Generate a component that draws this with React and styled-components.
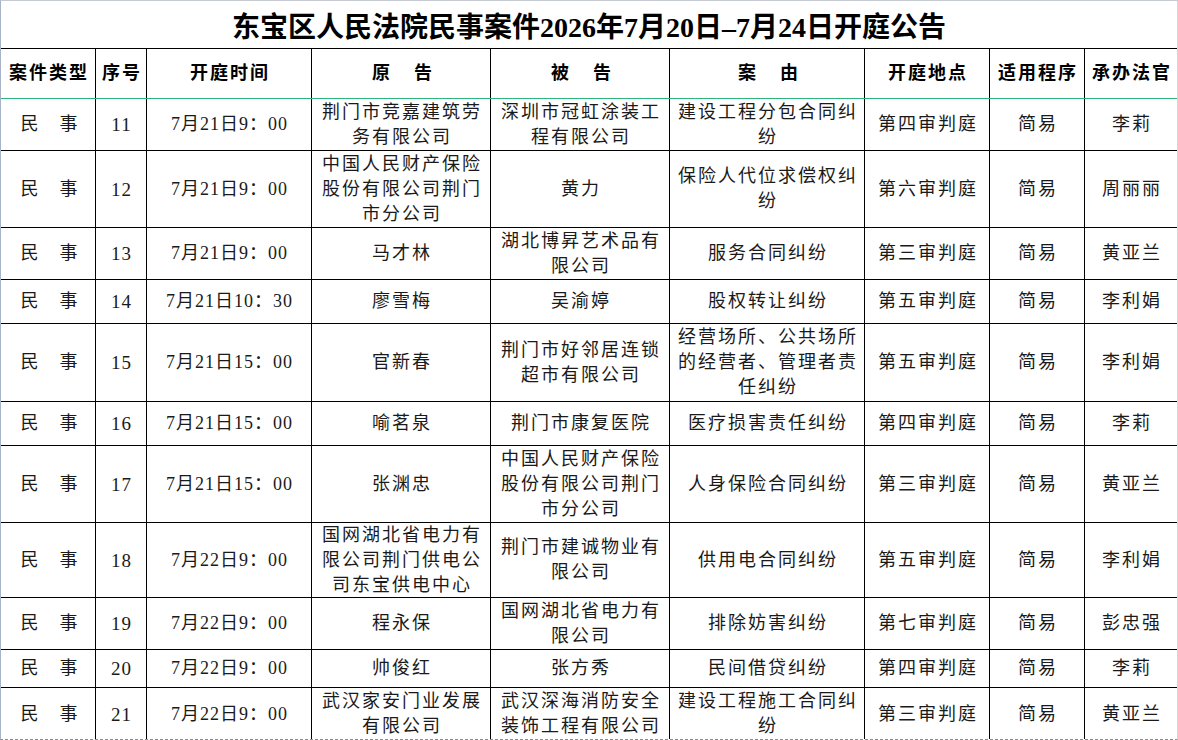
import React from 'react';
import styled, { createGlobalStyle } from 'styled-components';

const Global = createGlobalStyle`
  html, body { margin: 0; padding: 0; background: #fff; }
  body { font-family: "Liberation Serif", "Noto Sans CJK SC", serif; color: #000; }
`;

const COLS = '95px 51px 165px 179px 179px 195px 125px 95px 1fr';

const Sheet = styled.div`
  width: 1178px;
  height: 740px;
  box-sizing: border-box;
  overflow: hidden;
  background: #fff;
  border-top: 1px solid #c6cbd3;
  border-left: 1px solid #a6b3c9;
  border-right: 1px solid #d6d6d6;
  border-bottom: 1px dashed #8c8c8c;
  display: flex;
  flex-direction: column;
`;

const Title = styled.h1`
  margin: 0;
  height: 47px;
  flex-shrink: 0;
  display: flex;
  align-items: center;
  justify-content: center;
  font-family: "Liberation Serif", "Noto Sans CJK SC", serif;
  font-size: 28px;
  font-weight: 700;
  letter-spacing: 0;
  color: #000;
`;

const Table = styled.div`
  border-top: 1px solid #000;
  display: flex;
  flex-direction: column;
`;

const Row = styled.div`
  display: grid;
  grid-template-columns: ${COLS};
  height: ${(p) => p.$h}px;
  flex-shrink: 0;
  box-sizing: border-box;
  border-bottom: 1px solid ${(p) => (p.$head ? '#2db57b' : '#000')};
`;

const Cell = styled.div`
  box-sizing: border-box;
  border-right: 1px solid #000;
  display: flex;
  flex-direction: column;
  align-items: center;
  justify-content: center;
  text-align: center;
  overflow: hidden;
  font-size: ${(p) => (p.$num ? 19 : 18)}px;
  line-height: 25px;
  letter-spacing: ${(p) => (p.$tight ? 1 : 2)}px;
  padding-left: ${(p) => (p.$tight ? 1 : 2)}px;
  font-weight: ${(p) => (p.$head ? 700 : 400)};
  color: ${(p) => (p.$head ? '#000' : '#1a1a1a')};
  &:last-child { border-right: none; }
`;

const Line = styled.span`
  display: block;
  white-space: nowrap;
`;

const Spread = styled.span`
  display: inline-flex;
  gap: ${(p) => p.$gap}px;
  letter-spacing: 0;
`;

const headers = [
  { t: '案件类型' },
  { t: '序号' },
  { t: '开庭时间' },
  { s: ['原', '告'] },
  { s: ['被', '告'] },
  { s: ['案', '由'] },
  { t: '开庭地点' },
  { t: '适用程序' },
  { t: '承办法官' },
];

const rows = [
  { h: 52, n: '11', time: '7月21日9：00', p: ['荆门市竞嘉建筑劳', '务有限公司'], d: ['深圳市冠虹涂装工', '程有限公司'], r: ['建设工程分包合同纠', '纷'], room: '第四审判庭', judge: '李莉' },
  { h: 77, n: '12', time: '7月21日9：00', p: ['中国人民财产保险', '股份有限公司荆门', '市分公司'], d: ['黄力'], r: ['保险人代位求偿权纠', '纷'], room: '第六审判庭', judge: '周丽丽' },
  { h: 52, n: '13', time: '7月21日9：00', p: ['马才林'], d: ['湖北博昇艺术品有', '限公司'], r: ['服务合同纠纷'], room: '第三审判庭', judge: '黄亚兰' },
  { h: 44, n: '14', time: '7月21日10：30', p: ['廖雪梅'], d: ['吴渝婷'], r: ['股权转让纠纷'], room: '第五审判庭', judge: '李利娟' },
  { h: 78, n: '15', time: '7月21日15：00', p: ['官新春'], d: ['荆门市好邻居连锁', '超市有限公司'], r: ['经营场所、公共场所', '的经营者、管理者责', '任纠纷'], room: '第五审判庭', judge: '李利娟' },
  { h: 44, n: '16', time: '7月21日15：00', p: ['喻茗泉'], d: ['荆门市康复医院'], r: ['医疗损害责任纠纷'], room: '第四审判庭', judge: '李莉' },
  { h: 77, n: '17', time: '7月21日15：00', p: ['张渊忠'], d: ['中国人民财产保险', '股份有限公司荆门', '市分公司'], r: ['人身保险合同纠纷'], room: '第三审判庭', judge: '黄亚兰' },
  { h: 75, n: '18', time: '7月22日9：00', p: ['国网湖北省电力有', '限公司荆门供电公', '司东宝供电中心'], d: ['荆门市建诚物业有', '限公司'], r: ['供用电合同纠纷'], room: '第五审判庭', judge: '李利娟' },
  { h: 52, n: '19', time: '7月22日9：00', p: ['程永保'], d: ['国网湖北省电力有', '限公司'], r: ['排除妨害纠纷'], room: '第七审判庭', judge: '彭忠强' },
  { h: 38, n: '20', time: '7月22日9：00', p: ['帅俊红'], d: ['张方秀'], r: ['民间借贷纠纷'], room: '第四审判庭', judge: '李莉' },
  { h: 53, n: '21', time: '7月22日9：00', p: ['武汉家安门业发展', '有限公司'], d: ['武汉深海消防安全', '装饰工程有限公司'], r: ['建设工程施工合同纠', '纷'], room: '第三审判庭', judge: '黄亚兰' },
];

const Lines = ({ items }) => items.map((l, i) => <Line key={i}>{l}</Line>);

export default function App() {
  return (
    <>
      <Global />
      <Sheet>
        <Title>东宝区人民法院民事案件2026年7月20日–7月24日开庭公告</Title>
        <Table>
          <Row $h={50} $head>
            {headers.map((h, i) => (
              <Cell key={i} $head>
                {h.s ? (
                  <Spread $gap={24}>
                    <span>{h.s[0]}</span>
                    <span>{h.s[1]}</span>
                  </Spread>
                ) : (
                  h.t
                )}
              </Cell>
            ))}
          </Row>
          {rows.map((r) => (
            <Row key={r.n} $h={r.h}>
              <Cell>
                <Spread $gap={21}>
                  <span>民</span>
                  <span>事</span>
                </Spread>
              </Cell>
              <Cell $num $tight>{r.n}</Cell>
              <Cell $tight>{r.time}</Cell>
              <Cell><Lines items={r.p} /></Cell>
              <Cell><Lines items={r.d} /></Cell>
              <Cell><Lines items={r.r} /></Cell>
              <Cell>{r.room}</Cell>
              <Cell>简易</Cell>
              <Cell>{r.judge}</Cell>
            </Row>
          ))}
        </Table>
      </Sheet>
    </>
  );
}
